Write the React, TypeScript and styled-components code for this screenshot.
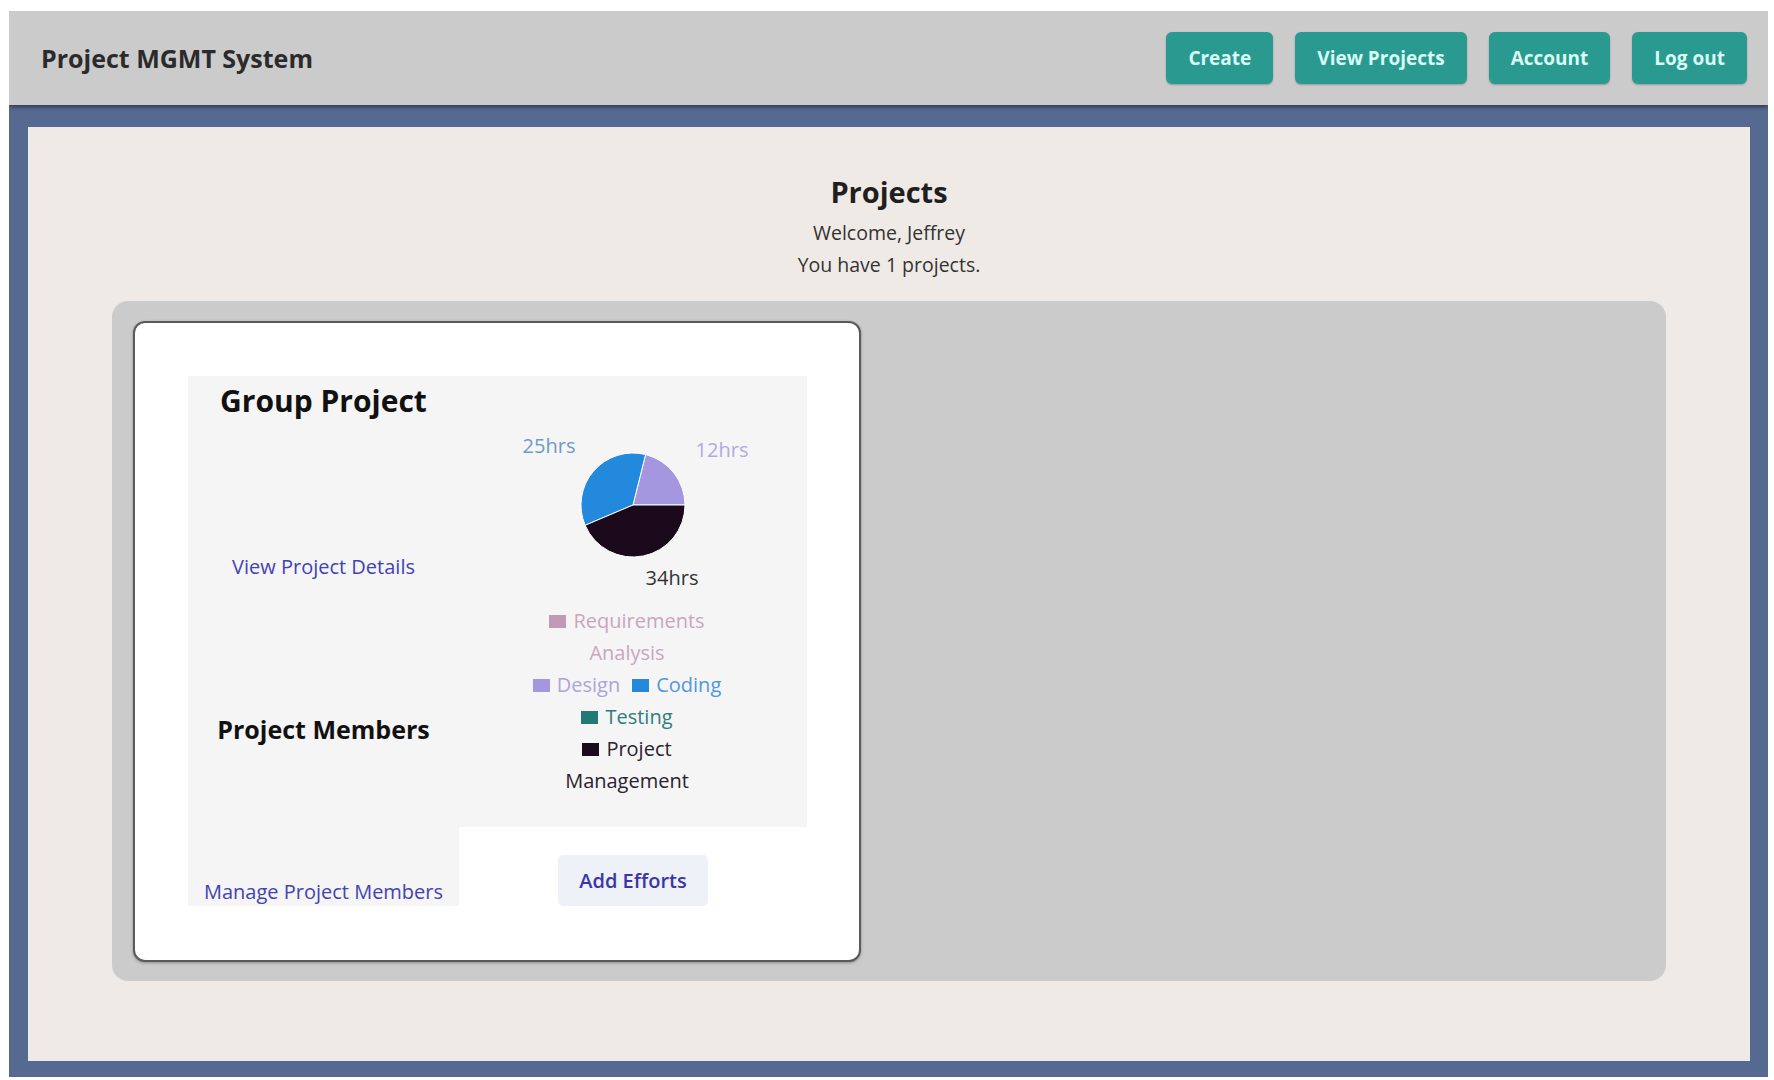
import React from "react";
import styled, { createGlobalStyle } from "styled-components";

const GlobalStyle = createGlobalStyle`
    * {
        box-sizing: border-box;
    }
    body {
        margin: 11px 6px 3px 9px;
        font-family: "Open Sans", "Noto Sans", "Liberation Sans", sans-serif;
        color: #222;
    }
`;

const Page = styled.div`
    height: calc(100vh - 14px);
    display: flex;
    flex-direction: column;
    background: #566990;
`;

const Header = styled.header`
    flex: none;
    height: 94px;
    display: flex;
    align-items: center;
    justify-content: space-between;
    padding: 0 21px 0 32px;
    background: #cbcbcb;
    box-shadow: 0 2px 4px rgba(0, 0, 0, 0.45);
    position: relative;
    z-index: 1;
`;

const Brand = styled.div`
    font-size: 25px;
    font-weight: 700;
    color: #2b2b2b;
`;

const Nav = styled.nav`
    display: flex;
    gap: 22px;
`;

const NavButton = styled.button`
    height: 52px;
    padding: 0 22px;
    border: none;
    border-radius: 6px;
    background: #2a9990;
    color: #d8fbf5;
    font-family: inherit;
    font-size: 19px;
    font-weight: 700;
    box-shadow: 0 1px 2px rgba(0, 0, 0, 0.25);
    cursor: pointer;
`;

const Frame = styled.main`
    flex: 1;
    display: flex;
    padding: 22px 18px 16px 19px;
`;

const Content = styled.section`
    flex: 1;
    display: flex;
    flex-direction: column;
    align-items: center;
    padding-top: 46px;
    background: #f0eae7;
`;

const Heading = styled.h1`
    margin: 0;
    font-size: 29px;
    line-height: 38px;
    font-weight: 700;
    color: #1f1f1f;
`;

const Greeting = styled.p<{ $first?: boolean }>`
    margin: ${(p) => (p.$first ? "6px" : "0")} 0 0;
    font-size: 19.5px;
    line-height: 32px;
    color: #333;
`;

const Board = styled.div`
    width: calc(100% - 168px);
    margin-top: 20px;
    display: flex;
    align-items: flex-start;
    padding: 20px 21px 19px;
    background: #cbcbcb;
    border-radius: 16px;
`;

const Card = styled.article`
    display: grid;
    grid-template-columns: 271px 348px;
    padding: 53px 52px 54px 53px;
    background: #fff;
    border: 2px solid #5a5a5a;
    border-radius: 12px;
    box-shadow: 0 1px 3px rgba(0, 0, 0, 0.3);
`;

const InfoColumn = styled.div`
    display: flex;
    flex-direction: column;
    align-items: center;
    justify-content: space-between;
    padding-top: 6px;
    background: #f5f5f5;
`;

const ProjectTitle = styled.h2`
    margin: 0;
    font-size: 30px;
    line-height: 38px;
    font-weight: 700;
    color: #111;
`;

const SubTitle = styled.h3`
    margin: 0;
    font-size: 25px;
    line-height: 32px;
    font-weight: 700;
    color: #111;
`;

const TextLink = styled.a`
    font-size: 20px;
    line-height: 28px;
    color: #4242b6;
    text-decoration: none;
    cursor: pointer;
`;

const ChartColumn = styled.div`
    display: flex;
    flex-direction: column;
    align-items: center;
`;

const ChartBox = styled.div`
    align-self: stretch;
    padding-bottom: 30px;
    background: #f5f5f5;
`;

const ChartSvg = styled.svg`
    display: block;
`;

const Legend = styled.ul`
    width: 232px;
    margin: 4px auto 0;
    padding: 0;
    list-style: none;
    text-align: center;
    font-size: 20px;
    line-height: 32px;
`;

const LegendItem = styled.li<{ $color: string }>`
    display: inline-block;
    margin-right: 12px;
    color: ${(p) => p.$color};
`;

const Swatch = styled.svg`
    display: inline-block;
    vertical-align: middle;
    margin: -3px 7px 0 0;
`;

const AddButton = styled.button`
    margin-top: 28px;
    height: 51px;
    padding: 0 21px;
    border: none;
    border-radius: 5px;
    background: #eef1f8;
    color: #3a36aa;
    font-family: inherit;
    font-size: 20px;
    font-weight: 600;
    cursor: pointer;
`;

type Slice = { name: string; lines: string[]; color: string; text: string };

const slices: Slice[] = [
    { name: "req", lines: ["Requirements", "Analysis"], color: "#c39ab5", text: "#caa6bd" },
    { name: "design", lines: ["Design"], color: "#a596e0", text: "#ada3dc" },
    { name: "coding", lines: ["Coding"], color: "#2389dc", text: "#4f98dc" },
    { name: "testing", lines: ["Testing"], color: "#1f7a78", text: "#2d7e7c" },
    { name: "pm", lines: ["Project", "Management"], color: "#1a0a1c", text: "#2a2230" },
];

const cx = 174;
const cy = 129;
const r = 52;

const point = (deg: number) => {
    const a = (deg * Math.PI) / 180;
    return `${(cx + r * Math.cos(a)).toFixed(2)},${(cy - r * Math.sin(a)).toFixed(2)}`;
};

const arc = (from: number, to: number) =>
    `M${cx},${cy} L${point(from)} A${r},${r} 0 ${to - from > 180 ? 1 : 0} 0 ${point(to)} Z`;

const EffortChart = () => (
    <ChartSvg width={348} height={225} viewBox="0 0 348 225">
        <path d={arc(0, 76)} fill="#a596e0" stroke="#fff" strokeWidth={1} />
        <path d={arc(76, 203)} fill="#2389dc" stroke="#fff" strokeWidth={1} />
        <path d={arc(203, 360)} fill="#1a0a1c" stroke="#fff" strokeWidth={1} />
        <g fontSize="20" textAnchor="middle" dominantBaseline="central">
            <text x={90} y={69} fill="#6b9cc8">25hrs</text>
            <text x={263} y={73} fill="#b2aadf">12hrs</text>
            <text x={213} y={201} fill="#333">34hrs</text>
        </g>
    </ChartSvg>
);

export default function App() {
    return (
        <>
            <GlobalStyle />
            <Page>
                <Header>
                    <Brand>Project MGMT System</Brand>
                    <Nav>
                        <NavButton>Create</NavButton>
                        <NavButton>View Projects</NavButton>
                        <NavButton>Account</NavButton>
                        <NavButton>Log out</NavButton>
                    </Nav>
                </Header>
                <Frame>
                    <Content>
                        <Heading>Projects</Heading>
                        <Greeting $first>Welcome, Jeffrey</Greeting>
                        <Greeting>You have 1 projects.</Greeting>
                        <Board>
                            <Card>
                                <InfoColumn>
                                    <ProjectTitle>Group Project</ProjectTitle>
                                    <TextLink>View Project Details</TextLink>
                                    <SubTitle>Project Members</SubTitle>
                                    <TextLink>Manage Project Members</TextLink>
                                </InfoColumn>
                                <ChartColumn>
                                    <ChartBox>
                                        <EffortChart />
                                        <Legend>
                                            {slices.map((s) => (
                                                <LegendItem key={s.name} $color={s.text}>
                                                    <Swatch width={17} height={17} viewBox="0 0 17 17">
                                                        <rect x={0} y={2} width={17} height={13} fill={s.color} />
                                                    </Swatch>
                                                    {s.lines[0]}
                                                    {s.lines[1] && (
                                                        <>
                                                            <br />
                                                            {s.lines[1]}
                                                        </>
                                                    )}
                                                </LegendItem>
                                            ))}
                                        </Legend>
                                    </ChartBox>
                                    <AddButton>Add Efforts</AddButton>
                                </ChartColumn>
                            </Card>
                        </Board>
                    </Content>
                </Frame>
            </Page>
        </>
    );
}
